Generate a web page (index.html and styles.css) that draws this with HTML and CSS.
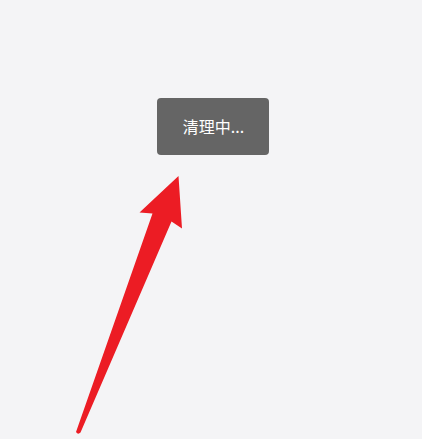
FILE: index.html
```html
<!DOCTYPE html>
<html lang="zh">
<head>
<meta charset="utf-8">
<link rel="stylesheet" href="styles.css">
</head>
<body>
<div class="page">
  <div class="toast">清理中...</div>
  <svg class="arrow" width="422" height="439" viewBox="0 0 422 439">
    <path d="M178.5 176 L182 228.5 L171.5 221.5 L80.5 432.5 Q78 435 76 432 L152.5 213.5 L139.5 212.5 Z" fill="#ec1c24"/>
  </svg>
</div>
</body>
</html>
```
FILE: styles.css
```css
html, body {
  margin: 0;
  padding: 0;
  background: #f4f4f6;
}
.page {
  position: relative;
  width: 422px;
  height: 439px;
  display: flex;
  flex-direction: column;
  align-items: center;
  font-family: "Noto Sans CJK SC", "Noto Sans", sans-serif;
}
.toast {
  margin-top: 98px;
  margin-left: 4px;
  width: 112px;
  height: 57px;
  box-sizing: border-box;
  background: #656565;
  border-radius: 4px;
  color: #ffffff;
  font-size: 16px;
  display: flex;
  align-items: center;
  justify-content: center;
  padding-bottom: 2px;
  padding-left: 1px;
}
.arrow {
  position: absolute;
  left: 0;
  top: 0;
}
```
